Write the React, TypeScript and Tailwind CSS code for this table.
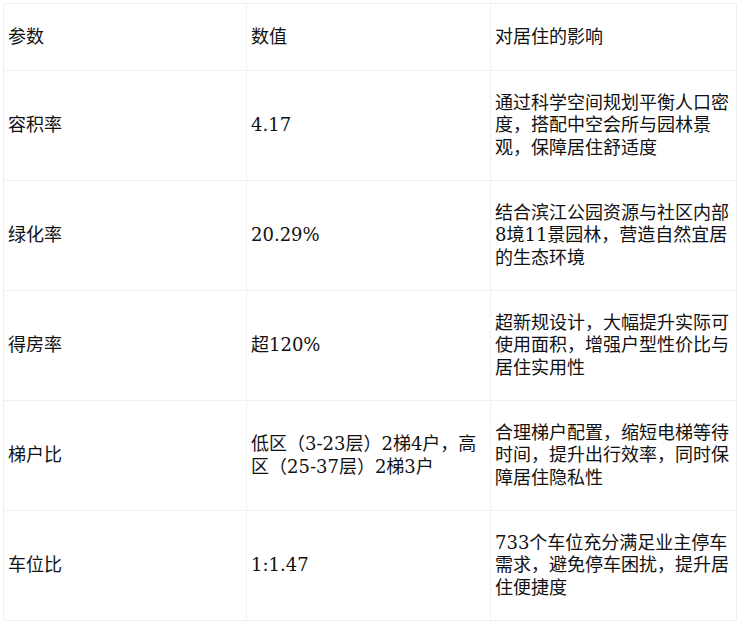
const rows = [
  {
    name: "容积率",
    value: "4.17",
    effect: "通过科学空间规划平衡人口密度，搭配中空会所与园林景观，保障居住舒适度",
  },
  {
    name: "绿化率",
    value: "20.29%",
    effect: "结合滨江公园资源与社区内部8境11景园林，营造自然宜居的生态环境",
  },
  {
    name: "得房率",
    value: "超120%",
    effect: "超新规设计，大幅提升实际可使用面积，增强户型性价比与居住实用性",
  },
  {
    name: "梯户比",
    value: "低区（3-23层）2梯4户，高区（25-37层）2梯3户",
    effect: "合理梯户配置，缩短电梯等待时间，提升出行效率，同时保障居住隐私性",
  },
  {
    name: "车位比",
    value: "1:1.47",
    effect: "733个车位充分满足业主停车需求，避免停车困扰，提升居住便捷度",
  },
];

const cell = "border border-[#f0f0f0] px-1 text-left align-middle font-normal";

export default function App() {
  return (
    <div className="bg-white p-[3px] font-['DejaVu_Serif','Noto_Sans_CJK_SC',serif] text-[18px] leading-[22.5px] text-[#111]">
      <table className="w-full table-fixed border-collapse">
        <colgroup>
          <col className="w-[243px]" />
          <col className="w-[244px]" />
          <col />
        </colgroup>
        <thead>
          <tr className="h-[67px]">
            <th className={cell}>参数</th>
            <th className={cell}>数值</th>
            <th className={cell}>对居住的影响</th>
          </tr>
        </thead>
        <tbody>
          {rows.map((r) => (
            <tr key={r.name} className="h-[110px]">
              <td className={cell}>{r.name}</td>
              <td className={cell}>{r.value}</td>
              <td className={cell}>{r.effect}</td>
            </tr>
          ))}
        </tbody>
      </table>
    </div>
  );
}
